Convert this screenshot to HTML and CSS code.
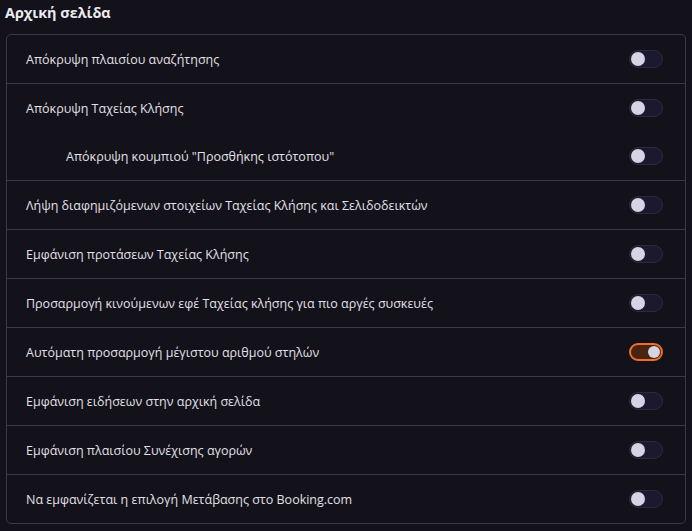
FILE: index.html
```html
<!DOCTYPE html>
<html lang="el">
<head>
<meta charset="utf-8">
<link rel="stylesheet" href="styles.css">
</head>
<body>
<h2 class="title">Αρχική σελίδα</h2>
<div class="card">
  <div class="row"><span class="label">Απόκρυψη πλαισίου αναζήτησης</span><span class="toggle"></span></div>
  <div class="row"><span class="label">Απόκρυψη Ταχείας Κλήσης</span><span class="toggle"></span></div>
  <div class="row sub"><span class="label">Απόκρυψη κουμπιού "Προσθήκης ιστότοπου"</span><span class="toggle"></span></div>
  <div class="row"><span class="label">Λήψη διαφημιζόμενων στοιχείων Ταχείας Κλήσης και Σελιδοδεικτών</span><span class="toggle"></span></div>
  <div class="row"><span class="label">Εμφάνιση προτάσεων Ταχείας Κλήσης</span><span class="toggle"></span></div>
  <div class="row"><span class="label">Προσαρμογή κινούμενων εφέ Ταχείας κλήσης για πιο αργές συσκευές</span><span class="toggle"></span></div>
  <div class="row"><span class="label">Αυτόματη προσαρμογή μέγιστου αριθμού στηλών</span><span class="toggle on"></span></div>
  <div class="row"><span class="label">Εμφάνιση ειδήσεων στην αρχική σελίδα</span><span class="toggle"></span></div>
  <div class="row"><span class="label">Εμφάνιση πλαισίου Συνέχισης αγορών</span><span class="toggle"></span></div>
  <div class="row"><span class="label">Να εμφανίζεται η επιλογή Μετάβασης στο Booking.com</span><span class="toggle"></span></div>
</div>
</body>
</html>
```
FILE: styles.css
```css
html, body {
  margin: 0;
  background: #131119;
}
body {
  padding: 0 6px 0 6px;
  font-family: "Open Sans", "Noto Sans", sans-serif;
  color: #e4e2ea;
}
.title {
  margin: 0;
  padding: 3px 0 0 0;
  margin-left: -1px;
  height: 34px;
  box-sizing: border-box;
  font-size: 14.4px;
  font-weight: 700;
  color: #ecebf0;
  line-height: 20px;
}
.card {
  border: 1px solid #3b3944;
  border-radius: 5px;
  width: 680px;
  box-sizing: border-box;
}
.row {
  height: 49px;
  display: flex;
  align-items: center;
  justify-content: space-between;
  padding: 0 22px 0 19px;
  border-top: 1px solid #3b3944;
  box-sizing: border-box;
}
.row:first-child { border-top: none; height: 48px; }
.row.sub { border-top: none; height: 48px; padding-left: 59px; }
.label {
  font-size: 12.5px;
  color: #e2e0e8;
}
.toggle {
  position: relative;
  width: 34px;
  height: 18px;
  box-sizing: border-box;
  border: 1px solid #2c2a3c;
  border-radius: 9px;
  background: #1b1930;
}
.toggle::after {
  content: "";
  position: absolute;
  left: 1px;
  top: 1px;
  width: 14px;
  height: 14px;
  border-radius: 50%;
  background: #d6d3e2;
}
.toggle.on {
  border: 2px solid #f0702a;
  background: #4a2412;
}
.toggle.on::after {
  left: auto;
  right: 1px;
  top: 1px;
  width: 12px;
  height: 12px;
}
```
